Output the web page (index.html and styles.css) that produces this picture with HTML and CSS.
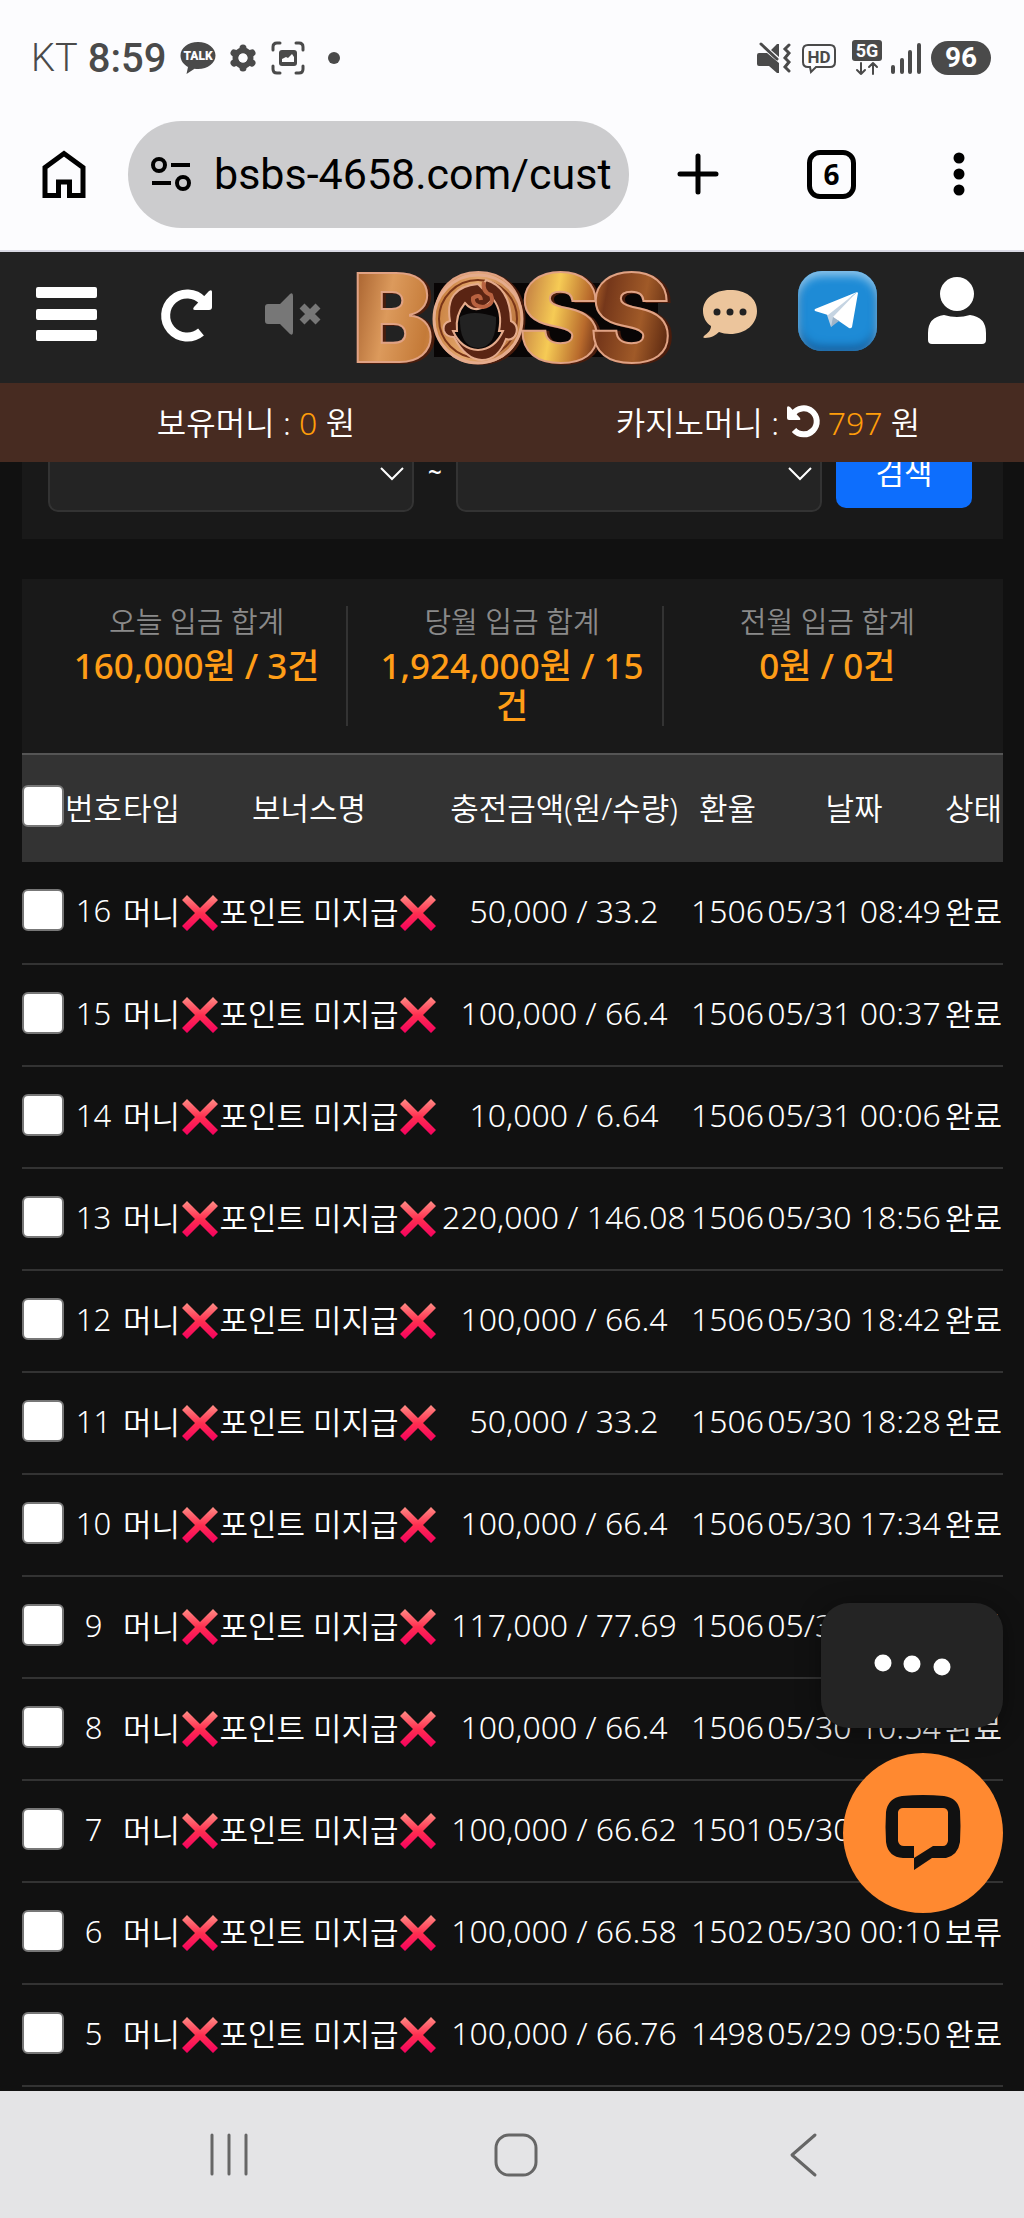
FILE: index.html
```html
<!DOCTYPE html>
<html lang="ko">
<head>
	<meta charset="UTF-8">
	<meta name="viewport" content="width=device-width, initial-scale=1.0">
	<title>BOSS</title>
	<link rel="stylesheet" href="styles.css">
</head>

<body>
	<svg width="0" height="0" class="defs" aria-hidden="true">
		<defs>
			<linearGradient id="xred" x1="0" y1="0" x2="0" y2="1">
				<stop offset="0" stop-color="#ff8d85" />
				<stop offset="0.5" stop-color="#ff2f50" />
				<stop offset="1" stop-color="#f5005f" />
			</linearGradient>
			<symbol id="cross" viewBox="0 0 38 38">
				<path fill="url(#xred)" d="M6 2 19 15 32 2 37 7 24 20 37 33 32 38 19 25 6 38 1 33 14 20 1 7Z" />
			</symbol>
		</defs>
	</svg>

	<div class="status">
		<span class="carrier">KT</span>
		<span class="clock">8:59</span>
		<svg class="ic_talk" width="36" height="34" viewBox="0 0 36 34">
			<path fill="#4a4a4a" d="M18 1C8 1 .5 7 .5 14.500c0 5 3 9 7.500 11.500L6.500 33l8-5.200c1 .2 2 .2 3.500.2 10 0 17.500-6 17.500-13.500S28 1 18 1Z" />
			<text x="18" y="19" text-anchor="middle" class="talk">TALK</text>
		</svg>
		<svg class="ic_gear" width="28" height="28" viewBox="0 0 28 28">
			<circle cx="14" cy="14" r="7.500" fill="none" stroke="#4a4a4a" stroke-width="6" />
			<path stroke="#4a4a4a" stroke-width="7" stroke-linecap="round" d="M14 4v1M14 24v-1M5 9l1 .5M23 19l-1-.5M5 19l1-.5M23 9l-1 .5" />
			<circle cx="14" cy="14" r="4.500" fill="#fcfcfe" />
		</svg>
		<svg class="ic_shot" width="34" height="34" viewBox="0 0 34 34">
			<path fill="none" stroke="#4a4a4a" stroke-width="3" stroke-linecap="round" d="M2 9V6q0-4 4-4h3M25 2h3q4 0 4 4v3M32 25v3q0 4-4 4h-3M9 32H6q-4 0-4-4v-3" />
			<rect x="8" y="9" width="18" height="16" rx="3" fill="#4a4a4a" />
			<path fill="#fcfcfe" d="M11 21v-3l4-2 2 1 4-4 2 3v5Z" />
		</svg>
		<i class="dot"></i>
		<svg class="ic_mute" width="34" height="32" viewBox="0 0 34 32">
			<path fill="#4a4a4a" d="M2 11h8l12 10v10h-2l-8-7H2q-2 0-2-2v-9q0-2 2-2ZM14 8l6-6h2v13Z" />
			<path fill="none" stroke="#4a4a4a" stroke-width="3" stroke-linecap="round" d="M4 2 20 17M32 3l-4 4 4 4-4 5 4 4-4 5 4 4" />
		</svg>
		<svg class="ic_hd" width="34" height="30" viewBox="0 0 34 30">
			<path fill="none" stroke="#4a4a4a" stroke-width="2" d="M6 2h22q5 0 5 5v12q0 5-5 5H14l-5 5-1-5H6q-5 0-5-5V7q0-5 5-5Z" />
			<text x="17" y="20" text-anchor="middle" class="hd">HD</text>
		</svg>
		<svg class="ic_5g" width="30" height="36" viewBox="0 0 30 36">
			<rect width="30" height="21" rx="3" fill="#4a4a4a" />
			<text x="15" y="17" text-anchor="middle" class="fiveg">5G</text>
			<path fill="none" stroke="#4a4a4a" stroke-width="2" stroke-linecap="round" stroke-linejoin="round" d="M9 23v11M5 30l4 4 4-4M21 34V23M17 27l4-4 4 4" />
		</svg>
		<svg class="ic_bars" width="30" height="32" viewBox="0 0 30 32">
			<path stroke="#4a4a4a" stroke-width="4" stroke-linecap="round" d="M2 25v5M11 18v12M19 10v20M28 3v27" />
		</svg>
		<span class="battery">96</span>
	</div>

	<div class="browser">
		<button type="button" class="home" title="Home">
			<svg width="44" height="48" viewBox="0 0 44 48"><path fill="none" stroke="#000" stroke-width="5" d="M3 17.500 22 3.500 41 17.500V45.500H27.500V32H16.500V45.500H3Z" /></svg>
		</button>
		<div class="url">
			<svg width="42" height="36" viewBox="0 0 42 36"><g fill="none" stroke="#000" stroke-width="4"><circle cx="9" cy="9" r="6" /><circle cx="33" cy="27" r="6" /><path d="M21 9h19M2 27h19" /></g></svg>
			<input type="text" value="bsbs-4658.com/cust" aria-label="URL">
		</div>
		<button type="button" class="plus" title="New tab">
			<svg width="42" height="42" viewBox="0 0 42 42"><path stroke="#000" stroke-width="5" stroke-linecap="round" d="M21 3v36M3 21h36" /></svg>
		</button>
		<button type="button" class="tabs" title="Tabs">6</button>
		<button type="button" class="more" title="Menu">
			<svg width="12" height="44" viewBox="0 0 12 44"><circle cx="6" cy="6" r="5.500" /><circle cx="6" cy="22" r="5.500" /><circle cx="6" cy="38" r="5.500" /></svg>
		</button>
	</div>

	<header>
		<button type="button" title="메뉴">
			<svg width="62" height="54" viewBox="0 0 62 54"><path fill="#fff" d="M2 0h57q2 0 2 2v7q0 2-2 2H2Q0 11 0 9V2Q0 0 2 0ZM2 22h57q2 0 2 2v7q0 2-2 2H2q-2 0-2-2v-7q0-2 2-2ZM2 43h57q2 0 2 2v7q0 2-2 2H2q-2 0-2-2v-7q0-2 2-2Z" /></svg>
		</button>
		<button type="button" title="새로고침">
			<svg width="54" height="54" viewBox="0 0 54 54"><path fill="none" stroke="#fff" stroke-width="9" d="M41 45A21.500 21.500 0 1 1 43 14" /><path fill="#fff" d="M52 5v15q0 3-3 3H35q-3 0-1-3L49 4q3-2 3 1Z" /></svg>
		</button>
		<button type="button" title="음소거">
			<svg width="56" height="42" viewBox="0 0 56 42"><path fill="#777" d="M3 11h12L25 1q3-2 3 2v36q0 4-3 2L15 31H3q-3 0-3-3V14q0-3 3-3Z" /><path stroke="#777" stroke-width="7" d="m37 13 16 16M53 13 37 29" /></svg>
		</button>
		<h1><a href="#" title="BOSS">
			<svg width="316" height="104" viewBox="0 0 316 104">
				<defs>
					<linearGradient id="copper" gradientUnits="userSpaceOnUse" x1="0" y1="10" x2="316" y2="70">
						<stop offset="0" stop-color="#a8622f" />
						<stop offset="0.12" stop-color="#dc9a5c" />
						<stop offset="0.25" stop-color="#c47a38" />
						<stop offset="0.38" stop-color="#e5a96f" />
						<stop offset="0.52" stop-color="#c07a42" />
						<stop offset="0.63" stop-color="#f6cb55" />
						<stop offset="0.73" stop-color="#b86a2c" />
						<stop offset="0.78" stop-color="#75371a" />
						<stop offset="0.9" stop-color="#a05a28" />
						<stop offset="1" stop-color="#5a2710" />
					</linearGradient>
				</defs>
				<path d="M80 14h214v20h10v40l-14 14H80Z" fill="#080505" />
				<text x="-2 77 165 236" y="93" class="logotext">BOSS</text>
				<circle cx="124" cy="50" r="44" fill="url(#copper)" stroke="#e5ab8c" stroke-width="3" />
				<circle cx="124" cy="50" r="39" fill="none" stroke="#7a3517" stroke-width="2" />
				<path fill="#5a2413" stroke="#e5ab8c" stroke-width="2" d="M96 52q-6-34 28-37l4 4 4-8q24 7 25 41 8 4 5 13-3 7-10 5-8 21-24 21T100 68q-8 0-10-6-2-8 6-10Z" />
				<path fill="#090606" stroke="#e5ab8c" stroke-width="2" d="M103 62q-2-16 8-28 12 14 28-4 10 13 6 32h4q-8 18-25 19-17-1-25-19Z" />
				<path fill="#222" d="M106 48q12-8 36 0 1 30-18 31-19-1-18-31Z" />
				<path fill="none" stroke="#b86240" stroke-width="4" d="M130 13q-2 10 7 13 4 10-8 12-11-1-10-9 7-5 8 2" />
			</svg>
		</a></h1>
		<button type="button" title="채팅">
			<svg width="56" height="50" viewBox="0 0 56 50"><path fill="#ecc59c" d="M28 1C12 1 1 10 1 22c0 6 3 12 8 15 0 4-3 7-7 10-1 1-1 2 1 2 6 0 11-3 14-6 3 1 7 2 11 2 16 0 27-10 27-23S44 1 28 1Z" /><circle cx="15" cy="23" r="3.500" fill="#222" /><circle cx="28" cy="23" r="3.500" fill="#222" /><circle cx="41" cy="23" r="3.500" fill="#222" /></svg>
		</button>
		<a href="#" class="telegram raised" title="Telegram">
			<svg width="46" height="40" viewBox="0 0 46 40"><path fill="#c5d4e2" d="m12 21 5 15 8-8 18-26Z" /><path fill="#fff" d="M43 1 1 18q-1 1 0 2l13 4L43 1ZM43 1 19 26l16 11q2 1 3-1L44 2Z" /><path fill="#9fb4c8" d="m17 36 2-10 6 4Z" /></svg>
		</a>
		<button type="button" class="raised" title="내정보">
			<svg width="60" height="68" viewBox="0 0 60 68"><circle cx="30" cy="17" r="17" fill="#fff" /><path fill="#fff" d="M17 38q13 4 26 0 16 2 16 18v7q0 4-4 4H5q-4 0-4-4v-7q0-16 16-18Z" /></svg>
		</button>
	</header>
	<div class="money">
		<p>보유머니 : <b>0</b> 원</p>
		<p>카지노머니 : <button type="button" title="카지노머니 새로고침"><svg width="32" height="32" viewBox="0 0 32 32"><path fill="none" stroke="#fff" stroke-width="6" d="M7 25A13 13 0 1 0 6 9" /><path fill="#fff" d="M0 3v10q0 2 2 2h10q2 0 1-2L3 2Q0 0 0 3Z" /></svg></button> <b>797</b> 원</p>
	</div>

	<main>
		<form class="search">
			<div class="pick">
				<select aria-label="시작일"><option></option></select>
				<svg width="24" height="14" viewBox="0 0 24 14"><path fill="none" stroke="#fff" stroke-width="2" d="m1 1 11 11L23 1" /></svg>
			</div>
			<span class="tilde">~</span>
			<div class="pick">
				<select aria-label="종료일"><option></option></select>
				<svg width="24" height="14" viewBox="0 0 24 14"><path fill="none" stroke="#fff" stroke-width="2" d="m1 1 11 11L23 1" /></svg>
			</div>
			<button type="button">검색</button>
		</form>

		<ul class="totals">
			<li><span>오늘 입금 합계</span><strong>160,000원 / 3건</strong></li>
			<li><span>당월 입금 합계</span><strong>1,924,000원 / 15건</strong></li>
			<li><span>전월 입금 합계</span><strong>0원 / 0건</strong></li>
		</ul>

		<table>
			<colgroup>
				<col class="c_check"><col class="c_no"><col class="c_type"><col class="c_bonus"><col><col class="c_rate"><col class="c_date"><col class="c_state">
			</colgroup>
			<thead>
				<tr><th><input type="checkbox" aria-label="전체 선택"></th><th>번호</th><th>타입</th><th>보너스명</th><th>충전금액(원/수량)</th><th>환율</th><th>날짜</th><th>상태</th></tr>
			</thead>
			<tbody>
				<tr><td><input type="checkbox" aria-label="16"></td><td>16</td><td>머니</td><td><svg><use href="#cross" /></svg>포인트 미지급<svg><use href="#cross" /></svg></td><td>50,000 / 33.2</td><td>1506</td><td>05/31 08:49</td><td>완료</td></tr>
				<tr><td><input type="checkbox" aria-label="15"></td><td>15</td><td>머니</td><td><svg><use href="#cross" /></svg>포인트 미지급<svg><use href="#cross" /></svg></td><td>100,000 / 66.4</td><td>1506</td><td>05/31 00:37</td><td>완료</td></tr>
				<tr><td><input type="checkbox" aria-label="14"></td><td>14</td><td>머니</td><td><svg><use href="#cross" /></svg>포인트 미지급<svg><use href="#cross" /></svg></td><td>10,000 / 6.64</td><td>1506</td><td>05/31 00:06</td><td>완료</td></tr>
				<tr><td><input type="checkbox" aria-label="13"></td><td>13</td><td>머니</td><td><svg><use href="#cross" /></svg>포인트 미지급<svg><use href="#cross" /></svg></td><td>220,000 / 146.08</td><td>1506</td><td>05/30 18:56</td><td>완료</td></tr>
				<tr><td><input type="checkbox" aria-label="12"></td><td>12</td><td>머니</td><td><svg><use href="#cross" /></svg>포인트 미지급<svg><use href="#cross" /></svg></td><td>100,000 / 66.4</td><td>1506</td><td>05/30 18:42</td><td>완료</td></tr>
				<tr><td><input type="checkbox" aria-label="11"></td><td>11</td><td>머니</td><td><svg><use href="#cross" /></svg>포인트 미지급<svg><use href="#cross" /></svg></td><td>50,000 / 33.2</td><td>1506</td><td>05/30 18:28</td><td>완료</td></tr>
				<tr><td><input type="checkbox" aria-label="10"></td><td>10</td><td>머니</td><td><svg><use href="#cross" /></svg>포인트 미지급<svg><use href="#cross" /></svg></td><td>100,000 / 66.4</td><td>1506</td><td>05/30 17:34</td><td>완료</td></tr>
				<tr><td><input type="checkbox" aria-label="9"></td><td>9</td><td>머니</td><td><svg><use href="#cross" /></svg>포인트 미지급<svg><use href="#cross" /></svg></td><td>117,000 / 77.69</td><td>1506</td><td>05/30 16:21</td><td>완료</td></tr>
				<tr><td><input type="checkbox" aria-label="8"></td><td>8</td><td>머니</td><td><svg><use href="#cross" /></svg>포인트 미지급<svg><use href="#cross" /></svg></td><td>100,000 / 66.4</td><td>1506</td><td>05/30 10:54</td><td>완료</td></tr>
				<tr><td><input type="checkbox" aria-label="7"></td><td>7</td><td>머니</td><td><svg><use href="#cross" /></svg>포인트 미지급<svg><use href="#cross" /></svg></td><td>100,000 / 66.62</td><td>1501</td><td>05/30 00:15</td><td>완료</td></tr>
				<tr><td><input type="checkbox" aria-label="6"></td><td>6</td><td>머니</td><td><svg><use href="#cross" /></svg>포인트 미지급<svg><use href="#cross" /></svg></td><td>100,000 / 66.58</td><td>1502</td><td>05/30 00:10</td><td>보류</td></tr>
				<tr><td><input type="checkbox" aria-label="5"></td><td>5</td><td>머니</td><td><svg><use href="#cross" /></svg>포인트 미지급<svg><use href="#cross" /></svg></td><td>100,000 / 66.76</td><td>1498</td><td>05/29 09:50</td><td>완료</td></tr>
			</tbody>
		</table>
	</main>

	<aside>
		<div class="typing">
			<svg width="78" height="24" viewBox="0 0 78 24" fill="#fff"><circle cx="10" cy="9" r="8.500" /><circle cx="39" cy="10" r="8.500" /><circle cx="69" cy="13" r="8.500" /></svg>
		</div>
		<button type="button" class="chat" title="상담">
			<svg width="76" height="76" viewBox="0 0 76 76"><path fill="#111" fill-rule="evenodd" d="M17 1q21-2 42 0 14 2 16 15 1 15 0 31-2 13-14 16H47L29 75V51H19q-5 0-6-5V17q1-4 5-4h40q4 0 5 4v29q-1 5-5 5H48L29 63H18Q3 62 1 47q-1-15 0-30Q3 3 17 1Z" /></svg>
		</button>
	</aside>

	<nav class="system">
		<button type="button" title="Recents"><svg width="42" height="44" viewBox="0 0 42 44"><path stroke="#666" stroke-width="3" stroke-linecap="round" d="M4 2v39M21 2v39M38 2v39" /></svg></button>
		<button type="button" title="Home"><svg width="46" height="46" viewBox="0 0 46 46"><rect x="3" y="3" width="40" height="40" rx="13" fill="none" stroke="#666" stroke-width="3" /></svg></button>
		<button type="button" title="Back"><svg width="28" height="46" viewBox="0 0 28 46"><path fill="none" stroke="#666" stroke-width="3" stroke-linecap="round" stroke-linejoin="round" d="M26 3 3 23 26 43" /></svg></button>
	</nav>
</body>

</html>
```
FILE: styles.css
```css
* {box-sizing: border-box;}

body {
	margin: 0;
	background-color: #111;
	color: #fff;
	font-family: "Noto Sans", "Noto Sans CJK KR", sans-serif;
	font-size: 31px;
	font-weight: 350;
}

button {padding: 0; border: 0; background: transparent; color: inherit; font: inherit;}
svg {display: block; overflow: visible;}
.defs {position: absolute;}

/* phone status bar */
.status {display: flex; align-items: center; height: 116px; padding: 0 33px 0 31px; background: #fcfcfe; color: #4a4a4a; font-family: Roboto, sans-serif; font-size: 38px; font-weight: 300;}
.clock {margin: 0 14px 0 10px; font-size: 40px; font-weight: 500;}
.talk {font: 900 12px Roboto, sans-serif; fill: #fcfcfe;}
.ic_gear {margin-left: 13px;}
.ic_shot {margin-left: 14px;}
.dot {width: 12px; height: 12px; margin-left: 23px; border-radius: 50%; background: #4a4a4a;}
.ic_mute {margin-left: auto;}
.ic_hd {margin-left: 11px;}
.hd {font: 700 17px Roboto, sans-serif; fill: #4a4a4a;}
.ic_5g {margin-left: 16px;}
.fiveg {font: 700 18px Roboto, sans-serif; fill: #fcfcfe;}
.ic_bars {margin: 0 10px 0 9px;}
.battery {width: 60px; border-radius: 17px; background: #4a4a4a; color: #fff; font-size: 28px; font-weight: 700; line-height: 34px; text-align: center;}

/* address bar */
.browser {display: flex; align-items: center; height: 136px; padding: 0 59px 18px 42px; border-bottom: 2px solid #d9d9e4; background: #fcfcfe; color: #000;}
.url {display: flex; flex: 1; align-items: center; gap: 22px; min-width: 0; height: 107px; margin: 0 48px 0 42px; padding: 0 18px 0 22px; border-radius: 54px; background: #ccccce;}
.url svg {flex: none;}
.url input {flex: 1; min-width: 0; padding: 0; border: 0; outline: 0; background: transparent; color: #000; font: 400 43px Roboto, sans-serif;}
.tabs {width: 49px; height: 49px; margin: 0 97px 0 88px; border: 5px solid #000; border-radius: 13px; font: 700 28px "Noto Sans", sans-serif; line-height: 39px;}

/* site header */
header {
	display: grid;
	grid-template-columns: 121fr 120fr 92fr 346fr 90fr 124fr 116fr;
	align-items: center;
	justify-items: center;
	height: 131px;
	padding: 0 9px 8px 6px;
	background: #222;
}
header h1 {margin: 0; line-height: 1;}
header h1 svg {margin-top: 14px;}
.logotext {font: 900 122px Inter, sans-serif; fill: url(#copper); stroke: #e0a284; stroke-width: 2px; filter: drop-shadow(3px 1px 0 #4a1c0c);}
.telegram {display: grid; place-items: center; width: 79px; height: 80px; border-radius: 24px; background: #1e8bd6; box-shadow: inset 0 5px 9px #8cc4ea, inset 0 -5px 8px #155f9e;}
.raised {margin-bottom: 6px;}

.money {position: relative; z-index: 1; display: grid; grid-template-columns: 1fr 1fr; align-items: center; height: 79px; padding-bottom: 4px; background: #472b21; font-size: 32px; text-align: center;}
.money p {margin: 0;}
.money b {color: #ff9d0a; font-weight: 350;}
.money button {vertical-align: -2px;}

main {padding: 0 21px 0 22px;}

/* the search form slides under the money bar */
.search {display: flex; gap: 14px; margin: -40px 0 40px; padding: 14px 31px 27px 26px; background: #191919;}
.pick {position: relative; flex: 1;}
.pick select {display: block; width: 100%; height: 76px; border: 2px solid #333; border-radius: 10px; background: #242424; color: #fff; font: inherit; appearance: none;}
.pick svg {position: absolute; top: 31px; right: 10px; pointer-events: none;}
.tilde {width: 14px; font-size: 24px; font-weight: 600; line-height: 72px;}
.search button {width: 136px; height: 72px; border-radius: 10px; background: #0d6efd; font-size: 31px; font-weight: 400; line-height: 68px;}

.totals {display: flex; margin: 0; padding: 27px 26px 27px 11px; background: #191919; list-style-type: none; text-align: center;}
.totals li {flex: 1; padding: 0 14px 0 28px; border-right: 2px solid #333;}
.totals li:last-child {border-right: 0;}
.totals span {display: block; color: #8a8a8a; font-size: 29px; line-height: 32px;}
.totals strong {display: block; margin-top: 8px; color: #ff9d17; font-size: 35px; font-weight: 500; line-height: 40px;}

table {width: 100%; border-collapse: collapse; table-layout: fixed; white-space: nowrap;}
.c_check {width: 43px;}
.c_no {width: 57px;}
.c_type {width: 59px;}
.c_bonus {width: 256px;}
.c_rate {width: 73px;}
.c_date {width: 180px;}
.c_state {width: 59px;}
thead tr {height: 108px; border-top: 2px solid #555; background: #333;}
tbody tr {height: 102px; border-bottom: 2px solid #333;}
th, td {padding: 0 0 5px; font-weight: 350; text-align: center;}
td:nth-child(n+5):nth-child(-n+7) {font-size: 32px;}
td svg {display: inline-block; width: 38px; height: 38px; vertical-align: -7px;}
table input {display: block; width: 42px; height: 42px; margin: 0; border: 2px solid #777; border-radius: 6px; background: #fff; appearance: none;}
table input:checked {background: #0d6efd;}

aside {position: fixed; right: 21px; bottom: 305px; display: flex; flex-direction: column; align-items: flex-end; gap: 25px;}
.typing {display: grid; place-items: center; width: 182px; height: 125px; border-radius: 28px; background: #242424; box-shadow: 0 4px 24px rgba(0, 0, 0, 0.4);}
.chat {display: grid; place-items: center; width: 160px; height: 160px; border-radius: 50%; background: #ff8930;}

.system {display: flex; height: 128px; margin-top: 4px; padding: 0 78px 0 86px; background: #e4e4e6;}
.system button {display: grid; flex: 1; place-items: center;}
```
